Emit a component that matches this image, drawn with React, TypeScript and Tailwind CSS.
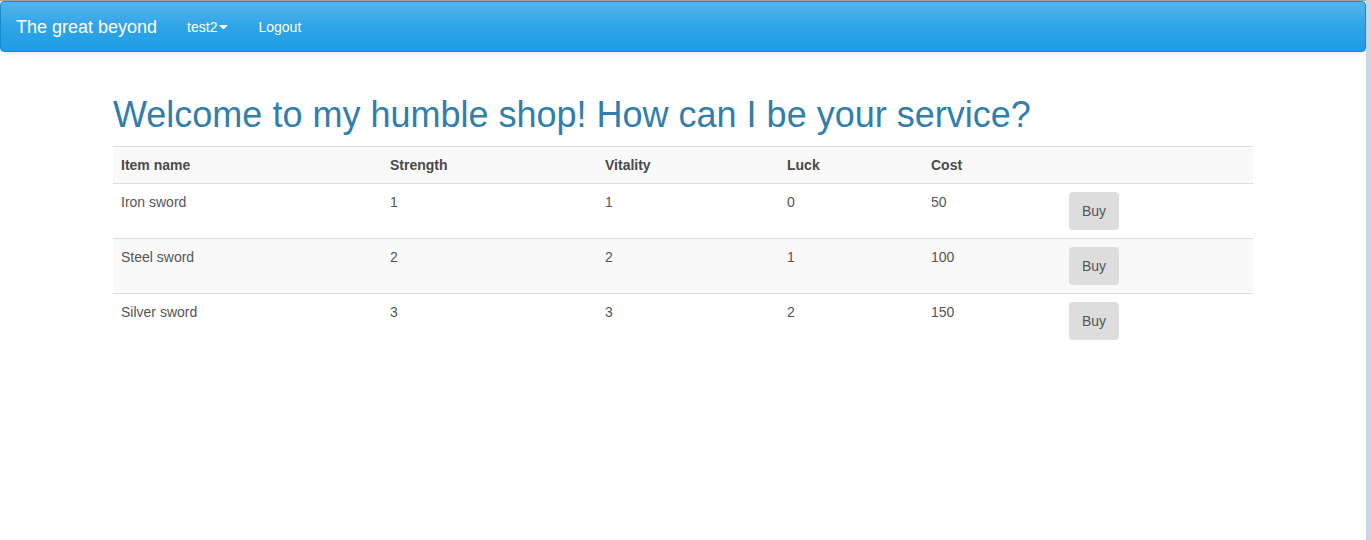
export default function App() {
  const rows = [
    { name: "Iron sword", s: 1, v: 1, l: 0, c: 50 },
    { name: "Steel sword", s: 2, v: 2, l: 1, c: 100 },
    { name: "Silver sword", s: 3, v: 3, l: 2, c: 150 },
  ];
  const font = { fontFamily: '"Liberation Sans", Arial, Helvetica, sans-serif' };
  return (
    <div className="flex h-[540px] w-[1371px] bg-white text-[14px] leading-[20px] text-[#555555]" style={font}>
      <div className="flex h-full w-[1366px] flex-col">
        <div className="h-px w-full bg-[#a9a9a9]" />
        <nav className="flex h-[51px] items-center rounded-[4px] border border-[#178acc] bg-gradient-to-b from-[#54b4eb] via-[#2fa4e7] to-[#1d9ce5] px-[15px] shadow-[0_1px_10px_rgba(0,0,0,0.1)]">
          <span className="text-[18px] leading-[20px] text-white">The great beyond</span>
          <span className="ml-[30px] flex items-center text-white">
            test2
            <svg width="9" height="5" viewBox="0 0 9 5" className="ml-[2px] mt-[2px]">
              <path d="M0 0 L9 0 L4.5 4.5 Z" fill="white" />
            </svg>
          </span>
          <span className="ml-[30px] text-white">Logout</span>
        </nav>
        <div className="mx-auto w-[1140px]">
          <h1 className="mt-[43px] mb-[11px] text-[36px] leading-[40px] text-[#317eac]">
            Welcome to my humble shop! How can I be your service?
          </h1>
          <div className="border-t border-[#dddddd]">
            <div className="grid grid-cols-[269px_215px_182px_144px_138px_192px] bg-[#f9f9f9] font-bold text-[#4a4a4a]">
              <div className="p-[8px]">Item name</div>
              <div className="p-[8px]">Strength</div>
              <div className="p-[8px]">Vitality</div>
              <div className="p-[8px]">Luck</div>
              <div className="p-[8px]">Cost</div>
              <div className="p-[8px]" />
            </div>
            {rows.map((r, i) => (
              <div
                key={r.name}
                className={`grid grid-cols-[269px_215px_182px_144px_138px_192px] border-t border-[#dddddd] ${i === 1 ? "bg-[#f9f9f9]" : "bg-white"}`}
              >
                <div className="p-[8px]">{r.name}</div>
                <div className="p-[8px]">{r.s}</div>
                <div className="p-[8px]">{r.v}</div>
                <div className="p-[8px]">{r.l}</div>
                <div className="p-[8px]">{r.c}</div>
                <div className="p-[8px]">
                  <button className="h-[38px] w-[50px] rounded-[4px] bg-[#dddddd] text-[14px] text-[#555555]">Buy</button>
                </div>
              </div>
            ))}
          </div>
        </div>
      </div>
      <div className="h-full w-[5px] bg-[#cbd5e6]" />
    </div>
  );
}
